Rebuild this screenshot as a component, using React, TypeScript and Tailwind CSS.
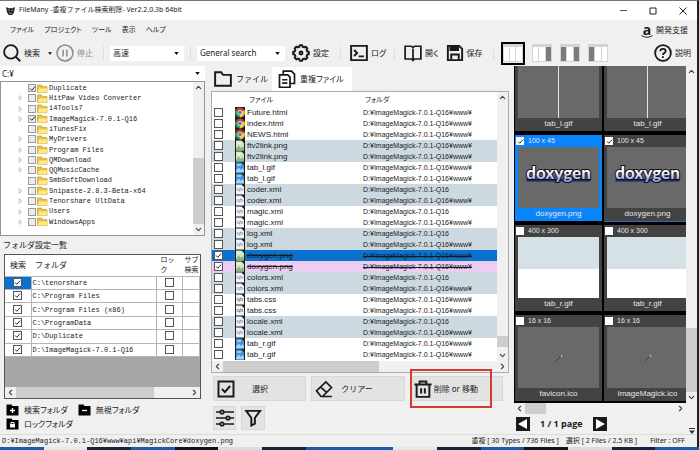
import { ReactNode, useState } from 'react';
import { ChevronDown, ChevronLeft, ChevronRight, ChevronUp } from 'lucide-react';
import clsx from 'clsx';

const tree = [
  { name: 'Duplicate', checked: true, leaf: true },
  { name: 'HitPaw Video Converter' },
  { name: 'i4Tools7' },
  { name: 'ImageMagick-7.0.1-Q16', checked: true },
  { name: 'iTunesFix', leaf: true },
  { name: 'MyDrivers' },
  { name: 'Program Files' },
  { name: 'QMDownload' },
  { name: 'QQMusicCache' },
  { name: 'SmbSoftDownload', leaf: true },
  { name: 'Snipaste-2.8.3-Beta-x64' },
  { name: 'Tenorshare UltData' },
  { name: 'Users' },
  { name: 'WindowsApps' },
];

const folders = [
  'C:\\tenorshare',
  'C:\\Program Files',
  'C:\\Program Files (x86)',
  'C:\\ProgramData',
  'D:\\Duplicate',
  'D:\\ImageMagick-7.0.1-Q16',
];

const ROOT = 'D:¥ImageMagick-7.0.1-Q16';
const WWW = ROOT + '¥www¥';

const files = [
  { name: 'Future.html', dir: WWW, tone: 'white' },
  { name: 'index.html', dir: WWW, tone: 'white' },
  { name: 'NEWS.html', dir: WWW, tone: 'white' },
  { name: 'ftv2link.png', dir: WWW, tone: 'blue' },
  { name: 'ftv2link.png', dir: WWW, tone: 'blue' },
  { name: 'tab_l.gif', dir: WWW, tone: 'white' },
  { name: 'tab_l.gif', dir: WWW, tone: 'white' },
  { name: 'coder.xml', dir: ROOT, tone: 'blue' },
  { name: 'coder.xml', dir: WWW, tone: 'blue' },
  { name: 'magic.xml', dir: ROOT, tone: 'white' },
  { name: 'magic.xml', dir: WWW, tone: 'white' },
  { name: 'log.xml', dir: ROOT, tone: 'blue' },
  { name: 'log.xml', dir: WWW, tone: 'blue' },
  { name: 'doxygen.png', dir: WWW, tone: 'selected' },
  { name: 'doxygen.png', dir: WWW, tone: 'pink' },
  { name: 'colors.xml', dir: ROOT, tone: 'blue' },
  { name: 'colors.xml', dir: WWW, tone: 'blue' },
  { name: 'tabs.css', dir: WWW, tone: 'white' },
  { name: 'tabs.css', dir: WWW, tone: 'white' },
  { name: 'locale.xml', dir: ROOT, tone: 'blue' },
  { name: 'locale.xml', dir: WWW, tone: 'blue' },
  { name: 'tab_r.gif', dir: WWW, tone: 'white' },
  { name: 'tab_r.gif', dir: WWW, tone: 'white' },
];

const tones: Record<string, string> = {
  white: 'bg-white',
  blue: 'bg-[#cdd9e0]',
  selected: 'bg-[#0a72cc]',
  pink: 'bg-[#eccdf4]',
};

const thumbs = [
  { name: 'tab_l.gif', art: 'line' },
  { name: 'tab_l.gif', art: 'line' },
  { name: 'doxygen.png', size: '100 x 45', art: 'doxygen', checked: true, active: true },
  { name: 'doxygen.png', size: '100 x 45', art: 'doxygen', checked: true },
  { name: 'tab_r.gif', size: '400 x 300', art: 'split' },
  { name: 'tab_r.gif', size: '400 x 300', art: 'split' },
  { name: 'favicon.ico', size: '16 x 16', art: 'wand' },
  { name: 'ImageMagick.ico', size: '16 x 16', art: 'wand' },
];

interface GlyphProps {
  children: ReactNode;
  className?: string;
  width?: number;
}

function Glyph({ children, className = 'size-[18px]', width = 2.6 }: GlyphProps) {
  return (
    <svg
      viewBox="0 0 24 24"
      className={clsx('shrink-0', className)}
      fill="none"
      stroke="currentColor"
      strokeWidth={width}
      aria-hidden="true"
    >
      {children}
    </svg>
  );
}

// eight rounded teeth around a ring
const gear = Array.from({ length: 8 }, (_, i) => {
  const point = (deg: number, r: number) => {
    const a = ((i * 45 + deg) * Math.PI) / 180;
    return `${(12 + r * Math.sin(a)).toFixed(2)} ${(12 - r * Math.cos(a)).toFixed(2)}`;
  };
  return `${i ? 'L' : 'M'}${point(-9, 10.6)}L${point(9, 10.6)}L${point(14, 8.6)}L${point(31, 8.6)}`;
}).join('') + 'Z';

function Check({ label, checked, className = 'size-[9px]' }: { label: string; checked?: boolean; className?: string }) {
  const [on, setOn] = useState(!!checked);
  return (
    <span className="inline-grid shrink-0 place-items-center">
      <input
        type="checkbox"
        aria-label={label}
        checked={on}
        onChange={() => setOn(!on)}
        className={clsx('col-start-1 row-start-1 appearance-none border border-[#555] bg-white', className)}
      />
      {on && (
        <svg viewBox="0 0 8 8" className="pointer-events-none col-start-1 row-start-1 size-[7px]" fill="none" stroke="#222" strokeWidth="1.1">
          <path d="M1.2 4 3.2 6 7 1.8" />
        </svg>
      )}
    </span>
  );
}

function Combo({ label, value, className }: { label: string; value: string; className: string }) {
  return (
    <span className={clsx('grid items-center bg-white', className)}>
      <select aria-label={label} className="col-start-1 row-start-1 size-full appearance-none truncate bg-transparent text-[8px]">
        <option>{value}</option>
      </select>
      <svg viewBox="0 0 6 4" className="pointer-events-none col-start-1 row-start-1 mr-[5px] h-[3px] w-[5px] justify-self-end">
        <path d="M0 0h6L3 4z" fill="#111" />
      </svg>
    </span>
  );
}

function Separator() {
  return <span className="h-[14px] w-px shrink-0 bg-[#dedede]" />;
}

function ToolButton({ icon, text, className }: { icon: ReactNode; text: string; className?: string }) {
  return (
    <button className={clsx('flex shrink-0 items-center gap-[3px] whitespace-nowrap', className)}>
      {icon}
      {text}
    </button>
  );
}

function HScroll({ thumb, className }: { thumb: string; className?: string }) {
  return (
    <div className={clsx('flex h-[11px] shrink-0 items-center bg-[#f0f0f0] text-[#444]', className)}>
      <ChevronLeft className="mx-px size-[9px]" strokeWidth={3} />
      <div className="h-full min-w-0 flex-1">
        <div className={clsx('h-full bg-[#cdcdcd]', thumb)} />
      </div>
      <ChevronRight className="mx-px size-[9px]" strokeWidth={3} />
    </div>
  );
}

function VScroll({ thumb }: { thumb: string }) {
  return (
    <div className="flex w-[11px] shrink-0 flex-col items-center bg-[#f0f0f0] text-[#444]">
      <ChevronUp className="my-px size-[9px]" strokeWidth={3} />
      <div className="flex min-h-0 w-full flex-1 flex-col justify-end">
        <div className={clsx('w-full bg-[#cdcdcd]', thumb)} />
      </div>
      <ChevronDown className="my-px size-[9px]" strokeWidth={3} />
    </div>
  );
}

function TitleBar() {
  return (
    <header className="flex h-[19px] shrink-0 items-center bg-white pr-[10px] pl-[6px] text-[7px]">
      <svg viewBox="0 0 10 9" className="mr-[4px] h-[8px] w-[9px]">
        <path d="M0 0l3 1.5h4L10 0 9 6 7 9H3L1 6z" fill="#222" />
        <path d="M2 3l2 1.2M8 3 6 4.2M3.5 7h3" stroke="#ddd" strokeWidth=".8" />
      </svg>
      <h1 className="flex-1">FileMany -重複ファイル検索削除- Ver2.2.0.3b 64bit</h1>
      <div className="flex items-center gap-[22px]">
        <button aria-label="最小化">
          <svg viewBox="0 0 8 8" className="size-[7px]" stroke="#333"><path d="M0 4h8" /></svg>
        </button>
        <button aria-label="最大化">
          <svg viewBox="0 0 8 8" className="size-[8px]" fill="none" stroke="#222"><path d="M1 1h6v6H1z" /></svg>
        </button>
        <button aria-label="閉じる">
          <svg viewBox="0 0 8 8" className="size-[8px]" stroke="#222"><path d="M.5.5l7 7M7.5.5l-7 7" /></svg>
        </button>
      </div>
    </header>
  );
}

function MenuBar() {
  return (
    <nav className="flex h-[20px] shrink-0 items-center pr-[9px] pl-[10px] text-[7px]">
      <div className="flex flex-1 gap-[10px] [font-feature-settings:'palt']">
        {['ファイル', 'プロジェクト', 'ツール', '表示', 'ヘルプ'].map((m) => (
          <button key={m}>{m}</button>
        ))}
      </div>
      <a href="#support" className="flex items-center gap-[3px] whitespace-nowrap">
        <span className="flex flex-col items-center">
          <span className="font-['Open_Sans',sans-serif] text-[14px] leading-[13px] font-bold">a</span>
          <svg viewBox="0 0 12 3" className="-mt-px h-[3px] w-[12px]">
            <path d="M.5.5Q6 4 11.5.6" fill="none" stroke="#222" />
          </svg>
        </span>
        <span className="text-[8px]">開発支援</span>
      </a>
    </nav>
  );
}

function LayoutButton({ shades, active }: { shades: boolean[]; active?: boolean }) {
  return (
    <button
      aria-label="レイアウト"
      className={clsx('flex shrink-0 items-center justify-center', active ? 'h-[23px] w-[24px] border-2 border-black' : 'h-[19px] w-[21px]')}
    >
      <span className="flex h-[18px] w-[20px] flex-col bg-[#d4d4d4] pb-px">
        <span className="h-[3px]" />
        <span className="flex flex-1 gap-px px-px">
          {shades.map((dark, i) => (
            <span key={i} className={clsx('flex-1', dark ? 'bg-[#7b7b7b]' : 'bg-white')} />
          ))}
        </span>
      </span>
    </button>
  );
}

function Toolbar() {
  return (
    <div className="flex h-[26px] shrink-0 items-center pr-[6px] pl-[3px] text-[8px] [font-feature-settings:'palt']">
      <ToolButton
        className="mr-[8px]"
        text="検索"
        icon={
          <Glyph width={2.4}>
            <circle cx="10.5" cy="10.5" r="9" />
            <path d="M17 17l6 6" />
          </Glyph>
        }
      />
      <svg viewBox="0 0 6 4" className="mr-[4px] h-[3px] w-[4px]"><path d="M0 0h6L3 4z" fill="#111" /></svg>
      <ToolButton
        className="mr-[10px] text-[#8a8a8a]"
        text="停止"
        icon={
          <Glyph width={2}>
            <circle cx="12" cy="12" r="10.6" />
            <path d="M9.5 7.5v9M14.5 7.5v9" />
          </Glyph>
        }
      />
      <Separator />
      <Combo label="速度" value="高速" className="mx-[6px] h-[15px] w-[74px] shrink-0 [&>select]:pl-[3px]" />
      <Separator />
      <Combo label="検索方法" value="General search" className="mr-[7px] ml-[6px] h-[15px] w-[88px] shrink-0 [&>select]:pl-[3px]" />
      <ToolButton
        className="mr-[11px]"
        text="設定"
        icon={
          <Glyph>
            <path d={gear} strokeLinejoin="round" />
            <circle cx="12" cy="12" r="2" />
          </Glyph>
        }
      />
      <Separator />
      <ToolButton
        className="mr-[8px] ml-[9px]"
        text="ログ"
        icon={
          <Glyph>
            <path d="M1.5 2.5h21v19h-21z" />
            <path d="M5.5 8l4 4-4 4M11.5 16.5h7" />
          </Glyph>
        }
      />
      <Separator />
      <ToolButton
        className="mr-[7px] ml-[9px]"
        text="開く"
        icon={
          <Glyph width={2.3}>
            <path d="M1.5 3H10l2 2 2-2h8.5v17H14l-2 2-2-2H1.5zM12 5v17" />
          </Glyph>
        }
      />
      <ToolButton
        className="mr-[10px]"
        text="保存"
        icon={
          <Glyph>
            <path d="M2.5 2.5h15l4 4v15h-19z" />
            <path d="M6 4h10v4H6z" fill="currentColor" />
            <path d="M7 21v-7h10v7" />
          </Glyph>
        }
      />
      <Separator />
      <div className="ml-[7px] flex flex-1 items-center gap-[7px]">
        <LayoutButton active shades={[false, false, false]} />
        <LayoutButton shades={[false, false, true]} />
        <LayoutButton shades={[true, false, true]} />
        <LayoutButton shades={[true, false, false]} />
      </div>
      <ToolButton
        text="説明"
        icon={
          <Glyph width={2.4}>
            <circle cx="12" cy="12" r="10.5" />
            <path d="M8.5 9.5Q8.5 6.5 12 6.5t3.5 3q0 1.7-2 2.7Q12 13 12 14.5M12 16.3v2.3" />
          </Glyph>
        }
      />
    </div>
  );
}

function FolderTree() {
  return (
    <div className="flex h-[155px] border border-[#8f959b] bg-white">
      <ul className="my-px flex h-[144px] min-w-0 flex-1 flex-col justify-between pl-[17px] font-['Liberation_Mono','Noto_Sans_CJK_JP',monospace] text-[7px]">
        {tree.map((t) => (
          <li key={t.name} className="flex h-[10px] items-center whitespace-nowrap">
            <svg viewBox="0 0 5 7" className="mr-[5px] h-[6px] w-[5px]" fill="none" stroke="#b9b9b9">
              {!t.leaf && <path d="M1 .8v5.4l3.2-2.7z" />}
            </svg>
            <Check label={t.name} checked={t.checked} className="size-[8px] border-[#9a9a9a]! bg-[#ececec]!" />
            <svg viewBox="0 0 11 9" className="mx-px h-[9px] w-[11px]">
              <path d="M.5 8.5V1h4l1 1.5H10v6z" fill="#e9c440" stroke="#b8922a" strokeWidth=".6" />
              <path d="M2 4.5h8.5l-1 4H.8z" fill="#ffe987" />
            </svg>
            {t.name}
          </li>
        ))}
      </ul>
      <VScroll thumb="h-[66px]" />
    </div>
  );
}

function FolderTable() {
  return (
    <div className="mx-[4px] flex h-[145px] flex-col overflow-hidden border border-[#555] bg-[#a6a6a6]">
      <table className="h-[102px] w-full table-fixed border-collapse bg-white text-[8px] leading-[8px]">
        <colgroup>
          <col className="w-[26px]" />
          <col />
          <col className="w-[26px]" />
          <col className="w-[17px]" />
        </colgroup>
        <thead>
          <tr className="h-[21px] text-left [&>th]:border-b [&>th]:border-[#b5b5b5] [&>th]:p-0 [&>th]:font-normal">
            <th className="text-center!">検索</th>
            <th className="pl-[4px]!">フォルダ</th>
            <th className="pl-[4px]! text-[7px] leading-[10px]">ロッ<br />ク</th>
            <th className="pl-[2px]! text-[7px] leading-[10px] whitespace-nowrap">サブ<br />検索</th>
          </tr>
        </thead>
        <tbody>
          {folders.map((f, i) => (
            <tr key={f} className="h-[13px] [&>td]:border-r [&>td]:border-b [&>td]:border-[#b5b5b5]">
              <td className={clsx('text-center leading-none', i === 0 && 'bg-[#0a72cc]')}>
                <Check label={f} checked />
              </td>
              <td className="overflow-hidden pl-px font-['Liberation_Mono','Noto_Sans_CJK_JP',monospace] text-[7px] whitespace-nowrap">{f}</td>
              <td className="text-center leading-none">
                <Check label={`${f} ロック`} />
              </td>
              <td />
            </tr>
          ))}
        </tbody>
      </table>
      <div className="flex-1" />
      <HScroll thumb="w-[80%]" />
    </div>
  );
}

function FolderButton({ text, children }: { text: string; children: ReactNode }) {
  return (
    <button className="flex h-[14px] items-center gap-[5px]">
      <svg viewBox="0 0 13 12" className="h-[12px] w-[13px]">
        <path d="M.5.5h5l1 1.5h6v9.5H.5z" fill="#000" />
        {children}
      </svg>
      {text}
    </button>
  );
}

function LeftPane() {
  return (
    <section className="flex min-w-0 flex-col">
      <Combo label="ドライブ" value="C:¥" className="h-[15px] [&>select]:pl-[2px]" />
      <FolderTree />
      <h2 className="h-[18px] pl-[3px] text-[8px] leading-[18px]">フォルダ設定一覧</h2>
      <FolderTable />
      <div className="flex flex-wrap gap-x-[10px] px-[6px] pt-[4px] text-[8px] [font-feature-settings:'palt']">
        <FolderButton text="検索フォルダ">
          <path d="M6.5 4v5M4 6.5h5" stroke="#fff" strokeWidth="1.3" />
        </FolderButton>
        <FolderButton text="無視フォルダ">
          <path d="M4 6.5h5" stroke="#fff" strokeWidth="1.3" />
        </FolderButton>
        <FolderButton text="ロックフォルダ">
          <path d="M4 6h5v3.5H4z" fill="#fff" />
          <path d="M5 6V4.5h3V6" fill="none" stroke="#fff" />
        </FolderButton>
      </div>
    </section>
  );
}

function FileIcon({ name }: { name: string }) {
  const ext = name.split('.')[1];
  if (ext === 'html') {
    return (
      <svg viewBox="0 0 10 11" className="block h-[11px] w-[10px]">
        <path d="M0 0h10v11H0z" fill="#222" />
        <path d="M5 5.5L.7 3a5 5 0 0 1 8.6 0z" fill="#d93a2b" />
        <path d="M5 5.5L9.3 3A5 5 0 0 1 5 10.5z" fill="#f3c42c" />
        <path d="M5 5.5v5A5 5 0 0 1 .7 3z" fill="#3c9a48" />
        <circle cx="5" cy="5.5" r="2.2" fill="#3f7fe0" stroke="#fff" strokeWidth=".7" />
      </svg>
    );
  }
  const image = ext === 'png' || ext === 'gif';
  return (
    <svg viewBox="0 0 10 11" className="block h-[11px] w-[10px]">
      <path d="M0 0h10v11H0z" fill="#1d1d1d" />
      <path d="M1 .5h5.5L9 3v7.5H1z" fill={ext === 'png' ? '#cfe6c4' : ext === 'gif' ? '#3f95e0' : '#f1f4f7'} />
      {image ? (
        <>
          <path d="M1 9l2.5-3.5L6 8l1.5-2L9 8.5v2H1z" fill={ext === 'png' ? '#86b879' : '#a8d4f5'} />
          <path d="M2 3h4" stroke="#fff" />
        </>
      ) : (
        <path d="M3.5 4L2.2 5.5 3.5 7M6.5 4l1.3 1.5L6.5 7M5.4 3.8l-.8 3.5" fill="none" stroke={ext === 'css' ? '#333' : '#4f6f8e'} strokeWidth=".8" />
      )}
    </svg>
  );
}

function FileList() {
  return (
    <div className="mr-[5px] ml-[6px] flex h-[282px] flex-col overflow-hidden border border-[#a9adb3] bg-white">
      <div className="flex min-h-0 flex-1">
        <table className="w-full flex-1 table-fixed self-start text-[8px] leading-[11px]">
          <colgroup>
            <col className="w-[23px]" />
            <col className="w-[12px]" />
            <col className="w-[116px]" />
            <col />
          </colgroup>
          <thead>
            <tr className="h-[15px] text-left text-[7px] [font-feature-settings:'palt']">
              <th />
              <th />
              <th className="pl-[2px] font-normal">ファイル</th>
              <th className="pl-[2px] font-normal">フォルダ</th>
            </tr>
          </thead>
          <tbody className="font-['Liberation_Sans','Noto_Sans_CJK_JP',sans-serif]">
            {files.map((f, i) => {
              const marked = f.tone === 'selected' || f.tone === 'pink';
              return (
                <tr key={i} className={clsx('h-[11px]', tones[f.tone])}>
                  <td className="p-0">
                    <span className="flex pl-[2px]">
                      <Check label={f.name} checked={marked} />
                    </span>
                  </td>
                  <td className="p-0"><FileIcon name={f.name} /></td>
                  <td className={clsx('p-0', marked && 'line-through')}>{f.name}</td>
                  <td className={clsx('p-0 text-[7px] whitespace-nowrap', marked && 'line-through')}>{f.dir}</td>
                </tr>
              );
            })}
          </tbody>
        </table>
        <VScroll thumb="mb-[3px] h-[11px]" />
      </div>
      <HScroll thumb="w-[57%]" />
    </div>
  );
}

const panelButton = 'border border-[#d8d8d8] bg-[#e3e3e3]';

function MiddlePane() {
  return (
    <section className="flex min-w-0 flex-col pt-px">
      <div role="tablist" className="flex h-[24px] pl-[6px] text-[8px]">
        <button role="tab" aria-selected="false" className="flex w-[61px] items-center gap-[4px] pl-[3px] whitespace-nowrap">
          <Glyph>
            <path d="M1.5 3h8L12 6.5h10.5V21h-21z" />
          </Glyph>
          ファイル
        </button>
        <button role="tab" aria-selected="true" className="flex w-[80px] items-center gap-[4px] bg-white pl-[6px] whitespace-nowrap [font-feature-settings:'palt']">
          <Glyph width={2.3}>
            <path d="M2 6.5h11l3 3V23H2zM7 6V1.5h11l4 4V18h-5.5" />
            <path d="M5.5 13h7M5.5 17.5h7" />
          </Glyph>
          重複ファイル
        </button>
      </div>
      <FileList />
      <div className="mt-[3px] grid grid-cols-3 gap-[5px] pr-[11px] pl-[8px] text-[8px]">
        <button className={clsx('flex h-[25px] items-center pl-[3px]', panelButton)}>
          <Glyph>
            <path d="M2 2h20v20H2z" />
            <path d="M6.5 12l4 4 7-8" />
          </Glyph>
          <span className="pl-[17px]">選択</span>
        </button>
        <button className={clsx('flex h-[25px] items-center pl-[3px]', panelButton)}>
          <Glyph width={2.3}>
            <path d="M2 14.5L14.5 2.5 22 10 10 22H8zM7.5 9.5l8 7M10 22h12.5" />
          </Glyph>
          <span className="pl-[8px]">クリアー</span>
        </button>
        <button className={clsx('relative flex h-[25px] items-center pl-[3px]', panelButton)}>
          <Glyph>
            <path d="M.5 6h23M7.5 6V2h9v4M3.5 6v16.5h17V6M9.5 11v7M14.5 11v7" />
          </Glyph>
          <span className="pl-[2px] whitespace-nowrap">削除 or 移動</span>
          <span className="pointer-events-none absolute -top-[8px] -left-px h-[39px] w-[82px] border-2 border-[#d63a30]" />
        </button>
      </div>
      <div className="mt-[5px] flex gap-[5px] pl-[8px]">
        <button aria-label="設定" className={clsx('flex h-[24px] w-[23px] items-center justify-center', panelButton)}>
          <Glyph width={2.3}>
            <path d="M0 4h5.5M10.5 4H24M0 12h13.5M18.5 12H24M0 20h5.5M10.5 20H24" />
            <circle cx="8" cy="4" r="2.3" />
            <circle cx="16" cy="12" r="2.3" />
            <circle cx="8" cy="20" r="2.3" />
          </Glyph>
        </button>
        <button aria-label="フィルター" className={clsx('flex h-[24px] w-[24px] items-center justify-center', panelButton)}>
          <Glyph>
            <path d="M3 2.5h18.5l-7 9.5v7.5L9.8 22V12z" />
          </Glyph>
        </button>
      </div>
    </section>
  );
}

function Art({ kind }: { kind: string }) {
  if (kind === 'line') return <div className="mx-auto h-full w-px bg-[#dfe5e8]" />;
  if (kind === 'split') {
    return (
      <div className="flex h-full flex-col bg-white">
        <div className="h-[32px] bg-[#d5e1e6]" />
      </div>
    );
  }
  if (kind === 'wand') {
    return (
      <div className="flex h-full items-center justify-center">
        <svg viewBox="0 0 12 12" className="size-[12px]">
          <path d="M3 9l5-5" stroke="#3c3c3c" />
          <circle cx="8.5" cy="4" r=".9" fill="#bbb" />
        </svg>
      </div>
    );
  }
  return (
    <svg viewBox="0 0 80 61" className="h-full w-full">
      <defs>
        <linearGradient id="logo" x1="0" y1="0" x2="0" y2="1">
          <stop offset=".45" stopColor="#fff" />
          <stop offset="1" stopColor="#7088e8" />
        </linearGradient>
      </defs>
      <g fontFamily="Lato, sans-serif" fontWeight="900" fontSize="17" textAnchor="middle">
        <path d="M8 32h64v2.500H8z" fill="#1b2760" />
        <text x="40" y="32" fill="url(#logo)" stroke="#111" strokeWidth="2" paintOrder="stroke">doxygen</text>
      </g>
    </svg>
  );
}

function Previews() {
  return (
    <section className="flex min-w-0 flex-col">
      <div className="flex h-[337px]">
        <div className="flex min-w-0 flex-1 flex-col justify-end overflow-hidden bg-black pb-[2px] pl-px">
          <ul className="grid grid-cols-[87px_87px] gap-x-[2px] gap-y-[4px] text-[8px] text-[#e6e6e6]">
            {thumbs.map((t, i) => (
              <li
                key={i}
                className={clsx(
                  "px-[3px] font-['Liberation_Sans','Noto_Sans_CJK_JP',sans-serif]",
                  t.active ? 'bg-[#0a84fb]' : 'bg-[#434343]',
                  t.checked && !t.active && 'shadow-[0_1px_0_#1d6fc0]'
                )}
              >
                <div className="-ml-[2px] flex h-[12px] items-center gap-[4px] text-[7px]">
                  <Check label={t.name} checked={t.checked} className="size-[8px] border-white!" />
                  {t.size}
                </div>
                <div className="h-[61px] bg-[#696969]">
                  <Art kind={t.art} />
                </div>
                <p className="h-[13px] text-center leading-[12px]">{t.name}</p>
              </li>
            ))}
          </ul>
        </div>
        <VScroll thumb="h-[64px]" />
      </div>
      <HScroll thumb="w-[14%]" className="mr-[11px]" />
      <div className="flex h-[20px] items-center justify-between px-[2px]">
        <div className="flex items-center gap-[10px]">
          <button aria-label="前のページ" className="flex size-[14px] items-center justify-center bg-[#1a1a1a]">
            <svg viewBox="0 0 10 10" className="size-[10px]"><path d="M9 0v10L0 5z" fill="#fff" /></svg>
          </button>
          <span className="font-['Open_Sans',sans-serif] text-[9px] font-bold">1 / 1 page</span>
          <button aria-label="次のページ" className="flex size-[14px] items-center justify-center bg-[#1a1a1a]">
            <svg viewBox="0 0 10 10" className="size-[10px]"><path d="M1 0v10l9-5z" fill="#fff" /></svg>
          </button>
        </div>
        <button aria-label="その他" className="self-end">
          <svg viewBox="0 0 6 6" className="size-[6px]"><path d="M0 .5h6" stroke="#333" /><path d="M0 2.5h6L3 6z" fill="#333" /></svg>
        </button>
      </div>
    </section>
  );
}

// slice of the desktop showing below the window
const desktop = ['bg-[#1c5aa8]', 'bg-[#e8e8e8]', 'bg-[#16233c]', 'bg-[#1c5aa8]', 'bg-[#10161f]', 'bg-[#d9dde2]', 'bg-[#16233c]', 'bg-[#1c5aa8]'];

export default function App() {
  return (
    <div className="flex min-h-screen flex-col overflow-hidden bg-[#f0f0f0] font-['Noto_Sans','Noto_Sans_CJK_JP',sans-serif] text-[#1a1a1a]">
      <div className="flex flex-1 flex-col border-t border-r-2 border-t-[#777] border-r-[#1b1f26]">
        <TitleBar />
        <MenuBar />
        <Toolbar />
        <main className="grid flex-1 grid-cols-[205fr_309fr_183fr]">
          <LeftPane />
          <MiddlePane />
          <Previews />
        </main>
        <footer className="flex h-[13px] shrink-0 items-center border-t border-[#dcdcdc] pr-[12px] pl-[2px] text-[7px] whitespace-nowrap">
          <span className="flex-1 font-['Liberation_Mono','Noto_Sans_CJK_JP',monospace]">
            D:¥ImageMagick-7.0.1-Q16¥www¥api¥MagickCore¥doxygen.png
          </span>
          <span className="mr-[7px]">重複 [ 30 Types / 736 Files ]</span>
          <span className="mr-[13px]">選択 [ 2 Files / 2.5 KB ]</span>
          <span>Filter : OFF</span>
        </footer>
      </div>
      <div className="flex h-[3px] shrink-0">
        {[...desktop, ...desktop].map((c, i) => (
          <span key={i} className={clsx('flex-1', c)} />
        ))}
      </div>
    </div>
  );
}
